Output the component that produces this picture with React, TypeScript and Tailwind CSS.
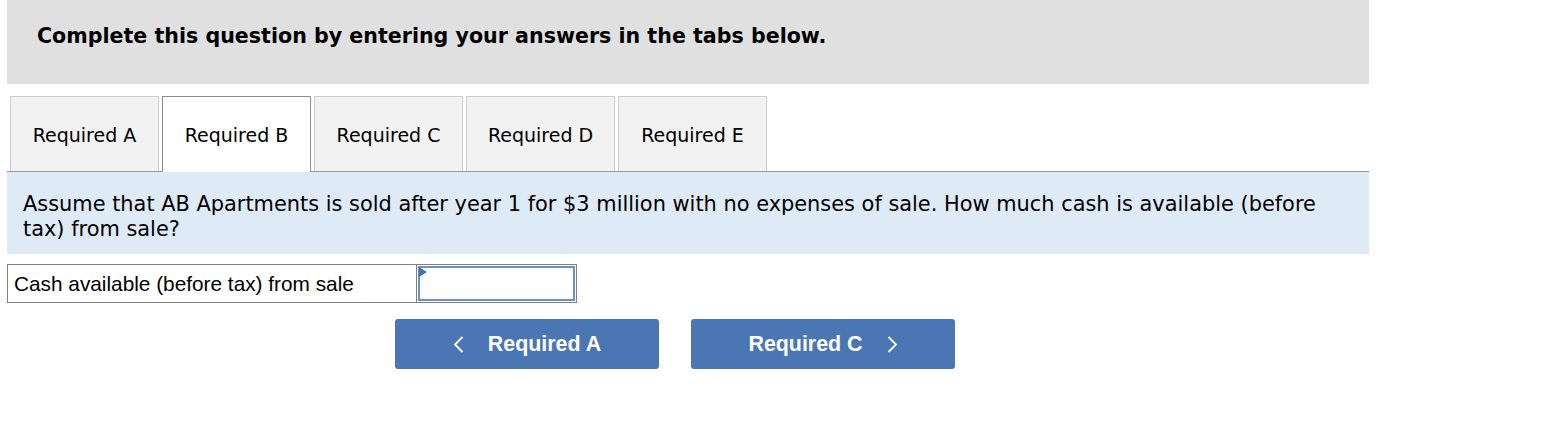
const tabs = ["Required A", "Required B", "Required C", "Required D", "Required E"];

function Chevron({ dir }: { dir: "left" | "right" }) {
  return (
    <svg width="11" height="17" viewBox="0 0 11 17" fill="none">
      <polyline
        points={dir === "left" ? "9.5,1 2,8.5 9.5,16" : "1.5,1 9,8.5 1.5,16"}
        stroke="white"
        strokeWidth="1.8"
      />
    </svg>
  );
}

export default function App() {
  return (
    <div className="min-h-screen bg-white pl-[7px] font-['DejaVu_Sans',sans-serif] text-black">
      <div className="w-[1362px]">
        <div className="flex h-[84px] items-center bg-[#e0e0e0] pl-[30px] pb-[12px]">
          <h1 className="text-[20.6px] font-bold">Complete this question by entering your answers in the tabs below.</h1>
        </div>

        <div className="mt-[12px] flex gap-[3px] border-b border-[#999999] pl-[3px]">
          {tabs.map((t, i) =>
            i === 1 ? (
              <div
                key={t}
                className="-mb-px flex h-[76px] w-[149px] items-center justify-center border border-b-0 border-[#8c8c8c] bg-white pt-[2px] text-[19px]"
              >
                {t}
              </div>
            ) : (
              <div
                key={t}
                className="flex h-[75px] w-[149px] items-center justify-center border border-b-0 border-[#cccccc] bg-[#f2f2f2] pt-[2px] text-[19px]"
              >
                {t}
              </div>
            )
          )}
        </div>

        <div className="bg-[#deebf7] pt-[20px] pb-[12px] pl-[16px] pr-[40px] text-[20.9px] leading-[25px]">
          Assume that AB Apartments is sold after year 1 for $3 million with no expenses of sale. How much cash is available (before tax) from sale?
        </div>

        <div className="mt-[10px] flex h-[39px] font-['Liberation_Sans',Arial,sans-serif]">
          <div className="flex w-[410px] items-center border border-[#7f7f7f] pl-[6px] text-[20.8px]">
            Cash available (before tax) from sale
          </div>
          <div className="relative w-[160px] border border-l-0 border-[#7f7f7f] p-px">
            <div className="h-full w-full border-2 border-[#6b8fc7] bg-white" />
            <div className="absolute left-[2px] top-[2px] h-0 w-0 border-y-[5px] border-l-[8px] border-y-transparent border-l-[#3f6fb5]" />
          </div>
        </div>

        <div className="mt-[16px] flex gap-[32px] pl-[388px] font-['Liberation_Sans',Arial,sans-serif]">
          <button className="flex h-[50px] w-[264px] items-center justify-center gap-[24px] rounded-[3px] bg-[#4a76b4] text-[21.4px] font-bold text-white">
            <Chevron dir="left" />
            <span>Required A</span>
          </button>
          <button className="flex h-[50px] w-[264px] items-center justify-center gap-[24px] rounded-[3px] bg-[#4a76b4] text-[21.4px] font-bold text-white">
            <span>Required C</span>
            <Chevron dir="right" />
          </button>
        </div>
      </div>
    </div>
  );
}
